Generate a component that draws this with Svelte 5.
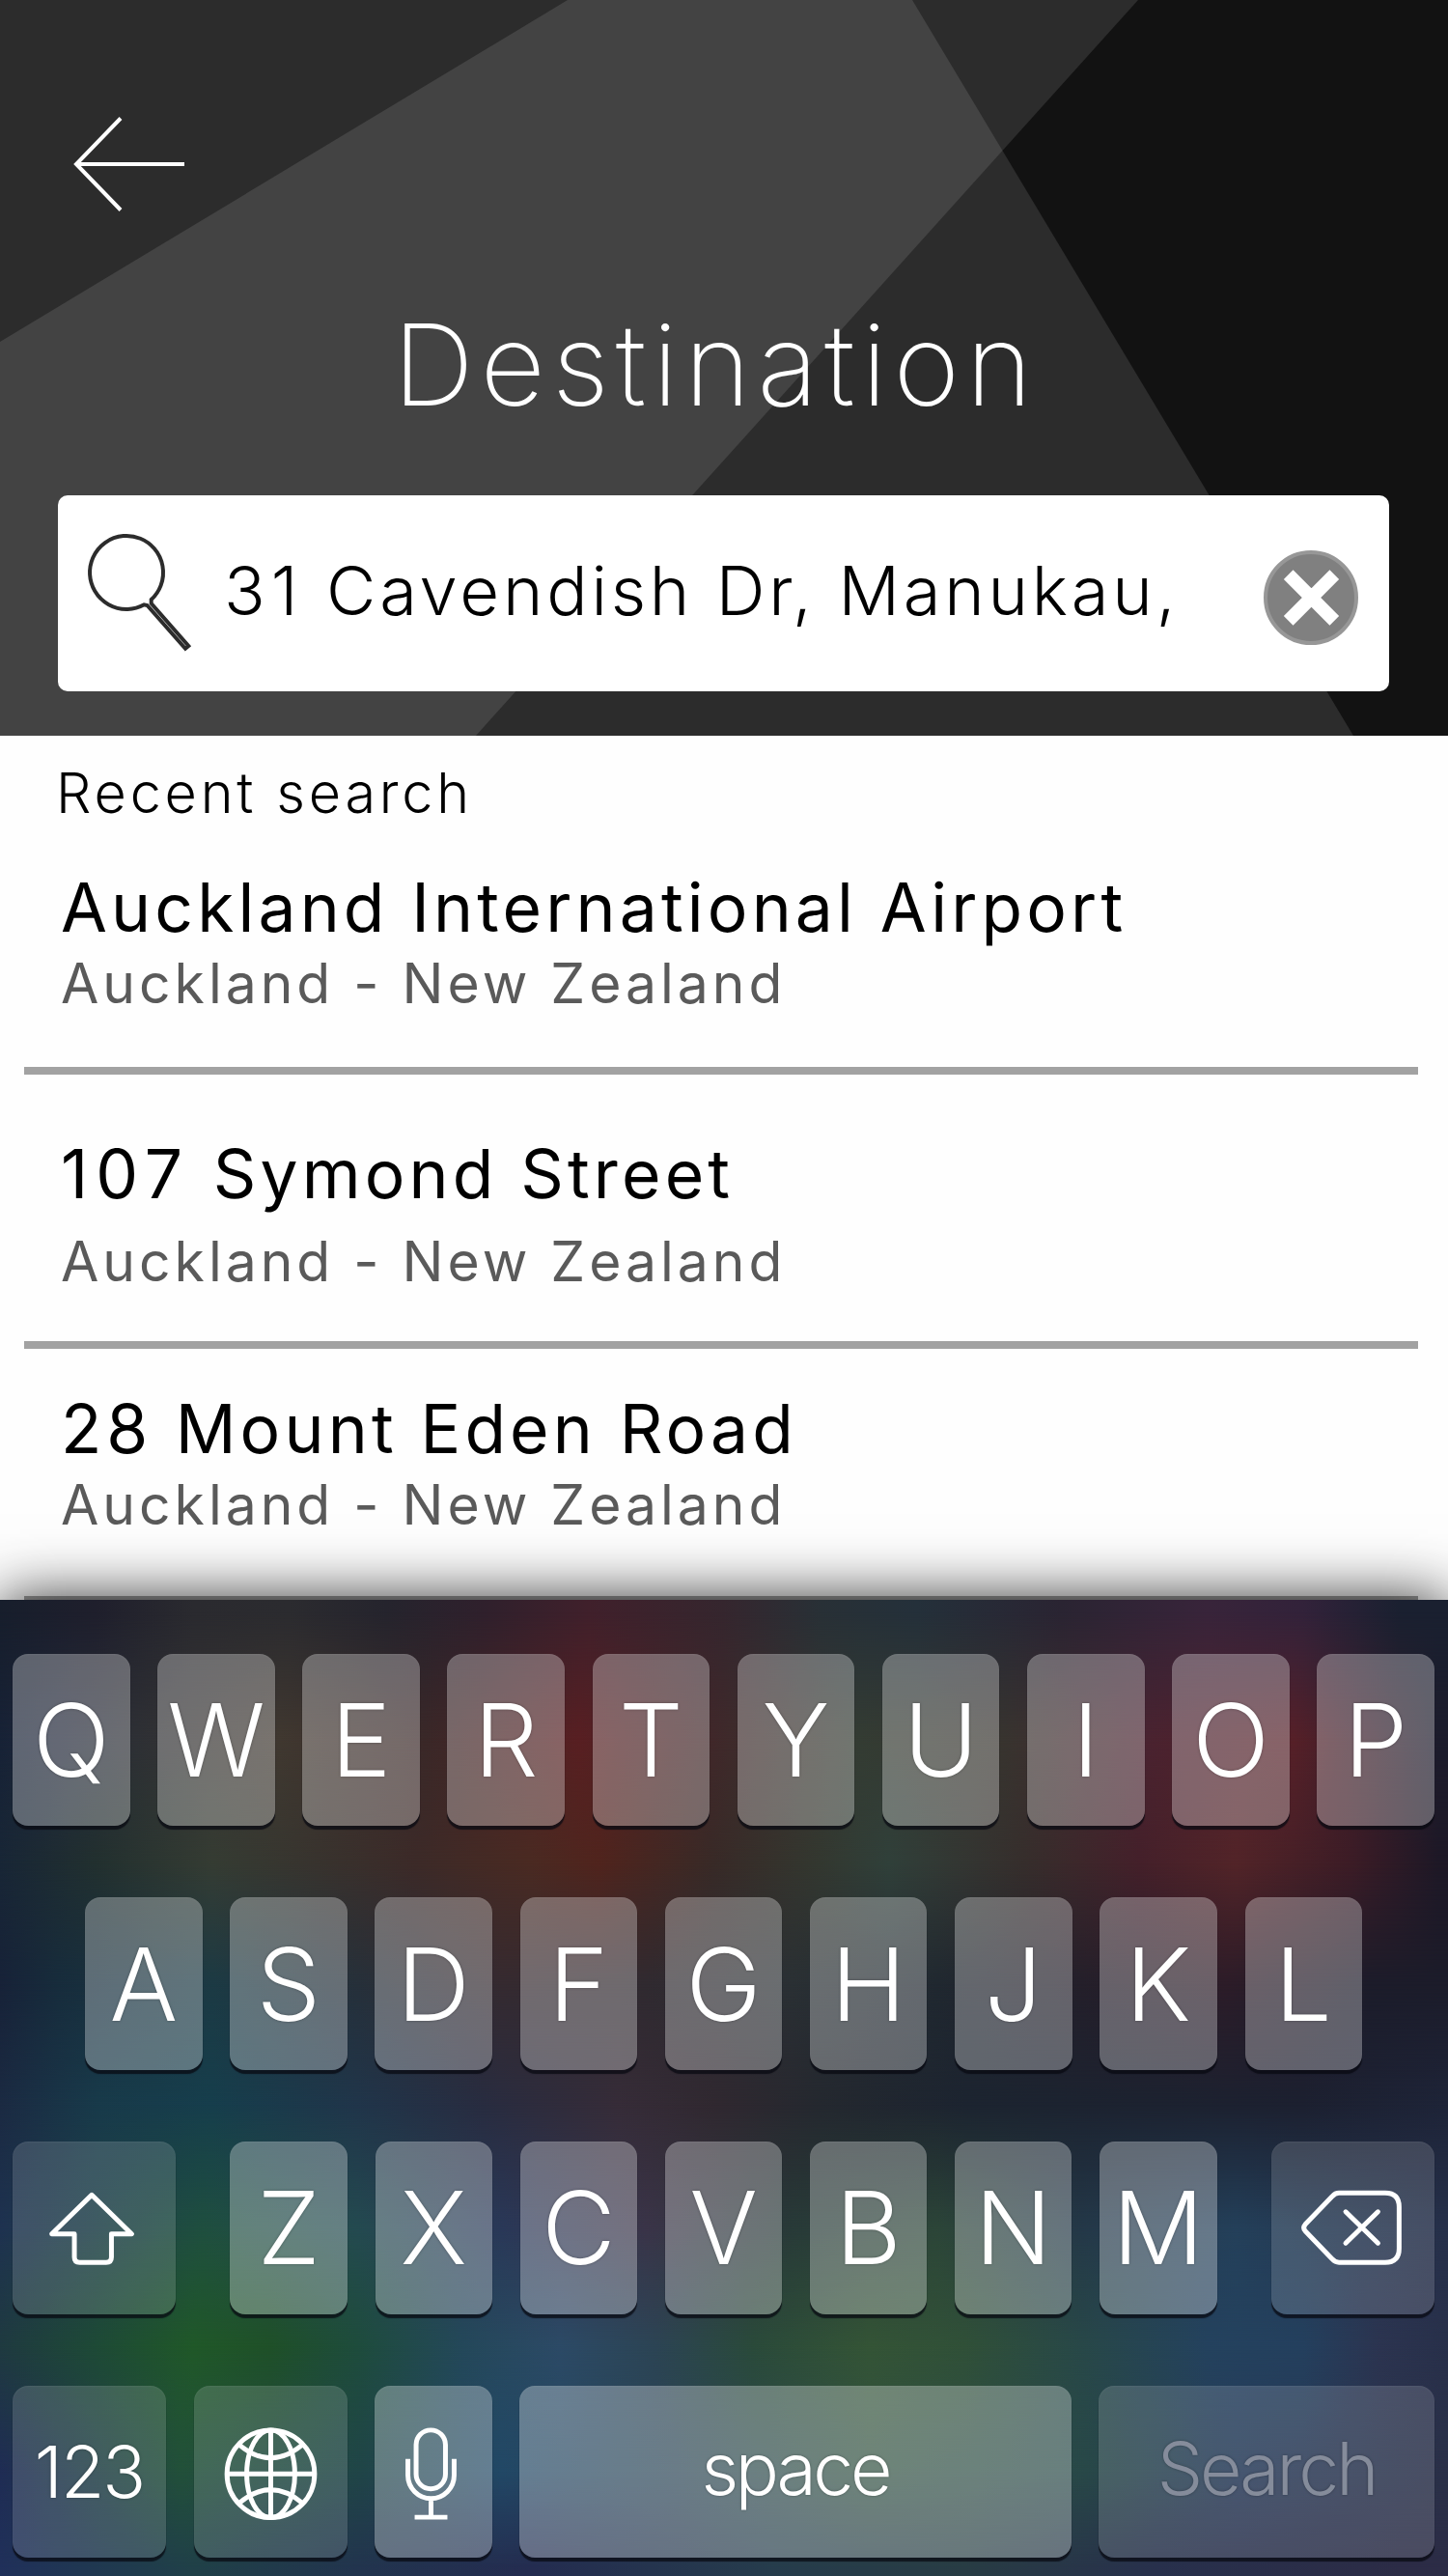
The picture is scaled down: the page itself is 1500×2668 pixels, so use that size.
<script>
  const places = [
    { number: '', name: 'Auckland International Airport', region: 'Auckland - New Zealand' },
    { number: '107', name: ' Symond Street', region: 'Auckland - New Zealand' },
    { number: '28', name: ' Mount Eden Road', region: 'Auckland - New Zealand' },
  ];

  const topRow = [...'QWERTYUIOP'];
  const homeRow = [...'ASDFGHJKL'];
  const bottomRow = [...'ZXCVBNM'];

  // Colour mesh behind the keys: each band lists [x, colour] stops at height y.
  const bands = [
    { y: 13, stops: [[0, '#171e2c'], [100, '#1f1f2c'], [200, '#2a2a2f'], [300, '#2b2b2f'], [400, '#25242d'], [500, '#2f202c'], [610, '#40202b'], [750, '#35262e'], [850, '#283036'], [950, '#24303a'], [1100, '#2a2432'], [1250, '#38243a'], [1350, '#32223a'], [1450, '#1a2030']] },
    { y: 143, stops: [[0, '#172236'], [60, '#22283a'], [140, '#2e3035'], [290, '#403830'], [440, '#3a2828'], [600, '#581f22'], [740, '#40282a'], [890, '#343c33'], [1040, '#38342f'], [1190, '#4a2330'], [1340, '#562028'], [1490, '#1c1c2c']] },
    { y: 273, stops: [[0, '#182636'], [100, '#22302f'], [220, '#353c33'], [330, '#38332e'], [430, '#3c2a28'], [550, '#4a2a22'], [620, '#50241d'], [740, '#382a27'], [850, '#333830'], [920, '#30403a'], [1060, '#362e2c'], [1180, '#44202a'], [1280, '#522428'], [1400, '#3c1c26'], [1490, '#1e1826']] },
    { y: 398, stops: [[0, '#172238'], [60, '#172c3c'], [220, '#1c3a44'], [370, '#26303a'], [520, '#352a30'], [670, '#302a30'], [820, '#2a3034'], [970, '#202830'], [1120, '#241f2a'], [1270, '#2c1c28'], [1420, '#1c1c2a']] },
    { y: 523, stops: [[0, '#1b2a42'], [100, '#183a4a'], [220, '#163e4c'], [370, '#20354a'], [500, '#282c40'], [640, '#362c38'], [740, '#302830'], [850, '#24282f'], [1000, '#1c2430'], [1200, '#1c2230'], [1350, '#1c2030'], [1500, '#1e2438']] },
    { y: 651, stops: [[0, '#1e3250'], [210, '#1f4f3f'], [370, '#244a50'], [520, '#2a3858'], [670, '#3a3448'], [820, '#283a38'], [970, '#2c4538'], [1120, '#243848'], [1280, '#24405a'], [1495, '#26304a']] },
    { y: 773, stops: [[0, '#1f3a40'], [100, '#1e4a36'], [200, '#205828'], [280, '#1f5028'], [370, '#1e4c3c'], [480, '#24485a'], [580, '#2c4a66'], [680, '#2c4454'], [780, '#2a4a3a'], [900, '#345436'], [1000, '#305038'], [1120, '#284848'], [1250, '#24425e'], [1350, '#24405e'], [1430, '#2c3450'], [1500, '#28304a']] },
    { y: 903, stops: [[0, '#1f2c54'], [187, '#22503a'], [375, '#204548'], [520, '#224866'], [700, '#2a4454'], [900, '#305040'], [1125, '#284848'], [1280, '#263a58'], [1495, '#2a3048']] },
    { y: 1003, stops: [[0, '#20305a'], [200, '#204048'], [370, '#22344e'], [550, '#242c50'], [800, '#263c4c'], [1000, '#283c44'], [1200, '#28304c'], [1450, '#2c2c46']] },
  ];

  function bandStyle(band, i) {
    const fill = band.stops.map(([x, c]) => `${c} ${x}px`).join(', ');
    const mask = i === 0 ? '' : `mask-image: linear-gradient(to bottom, transparent ${bands[i - 1].y}px, #000 ${band.y}px);`;
    return `background: linear-gradient(to right, ${fill}); ${mask}`;
  }
</script>

<main class="screen">
  <header class="hero">
    <svg class="facets" viewBox="0 0 1500 762" aria-hidden="true">
      <rect width="1500" height="762" fill="#2c2c2c" />
      <polygon points="588,0 945,0 1038.5,156 493,762 0,762 0,354" fill="#434343" />
      <polygon points="1179,0 1500,0 1500,762 1402,762 1038.5,156" fill="#121212" />
    </svg>
    <button class="back" aria-label="Back">
      <svg viewBox="0 0 116 100" width="116" height="100" fill="none" stroke="#fff" stroke-width="4">
        <path d="M50 2.5 4 50 50 97.5M4 50H116" />
      </svg>
    </button>
    <h1>Destination</h1>
    <div class="search">
      <svg class="lens" viewBox="88 551 112 126" width="112" height="126" fill="none" stroke="#2c2c2c" stroke-width="4">
        <path d="M148.300 626.300A38 38 0 1 1 155.700 621V625L194.300 669 191 671.800 151.500 627Z" />
      </svg>
      <span class="query"><span class="number">31</span> Cavendish Dr, Manukau,</span>
      <button class="clear" aria-label="Clear">
        <svg viewBox="0 0 98 98" width="98" height="98">
          <circle cx="49" cy="49" r="47" fill="#808080" stroke="#979797" stroke-width="4" />
          <path d="M25.700 25.200 73.300 72.800M73.300 25.200 25.700 72.800" stroke="#fff" stroke-width="13.700" />
        </svg>
      </button>
    </div>
  </header>

  <section class="recent">
    <h2>Recent search</h2>
    <ul>
      {#each places as place}
        <li>
          <p class="name"><span class="number">{place.number}</span>{place.name}</p>
          <p class="region">{place.region}</p>
        </li>
      {/each}
    </ul>
  </section>

  <section class="keyboard">
    <div class="glow" aria-hidden="true">
      {#each bands as band, i}
        <div class="band" style={bandStyle(band, i)}></div>
      {/each}
    </div>
    <div class="row">
      {#each topRow as k}<button class="key">{k}</button>{/each}
    </div>
    <div class="row home">
      {#each homeRow as k}<button class="key">{k}</button>{/each}
    </div>
    <div class="row">
      <button class="key dim wide" aria-label="Shift">
        <svg viewBox="13 2218 169 179" fill="none" stroke="#fff" stroke-width="5" stroke-linejoin="round">
          <path d="M95 2273.500 136.500 2314H115.500V2338Q115.500 2343.500 110 2343.500H82.500Q77 2343.500 77 2338V2314H53.500Z" />
        </svg>
      </button>
      <div class="letters">
        {#each bottomRow as k}<button class="key">{k}</button>{/each}
      </div>
      <button class="key dim wide" aria-label="Delete">
        <svg viewBox="1317 2218 169 179" fill="none" stroke="#fff" stroke-width="5" stroke-linejoin="round" stroke-linecap="round">
          <path d="M1387 2271.500H1435Q1449.500 2271.500 1449.500 2286V2329Q1449.500 2343.500 1435 2343.500H1387Q1383 2343.500 1380 2340L1352 2311Q1349 2307.500 1352 2304L1380 2275Q1383 2271.500 1387 2271.500Z" />
          <path d="M1394 2291 1427.500 2323.500M1427.500 2291 1394 2323.500" />
        </svg>
      </button>
    </div>
    <div class="row">
      <button class="key dim fn">123</button>
      <button class="key dim fn" aria-label="Next keyboard">
        <svg viewBox="201 2471 159 179" fill="none" stroke="#fff" stroke-width="5">
          <circle cx="280.500" cy="2562.500" r="45.500" />
          <ellipse cx="280.500" cy="2562.500" rx="25" ry="45.500" />
          <path d="M280.500 2517V2608M235 2562.500H326M247.500 2532Q280.500 2560 313.500 2532M247.500 2593Q280.500 2565 313.500 2593" />
        </svg>
      </button>
      <button class="key" aria-label="Dictate">
        <svg viewBox="388.500 2471 121.500 179" fill="none" stroke="#fff" stroke-width="5">
          <rect x="431.500" y="2517" width="30.500" height="61" rx="15.250" />
          <path d="M423 2547V2564A24 24 0 0 0 471 2564V2547M447 2588V2607M430 2607.500H464" />
        </svg>
      </button>
      <button class="key word space">space</button>
      <button class="key dim word go">Search</button>
    </div>
  </section>
</main>

<style>
  :global(body) {
    margin: 0;
    background: #fff;
  }

  .screen {
    width: 1500px;
    height: 2668px;
    overflow: hidden;
    font-family: Inter, 'Liberation Sans', sans-serif;
    color: #000;
    background: #fefefe;
  }

  h1, h2, p, ul {
    margin: 0;
    padding: 0;
    font-weight: 400;
    list-style: none;
    white-space: nowrap;
  }

  button {
    padding: 0;
    border: 0;
    background: none;
    color: inherit;
    font: inherit;
  }

  svg {
    display: block;
  }

  .hero {
    position: relative;
    box-sizing: border-box;
    height: 762px;
    padding: 120px 61px 0 60px;
    display: flex;
    flex-direction: column;
    color: #fff;
  }

  .facets {
    position: absolute;
    inset: 0;
    width: 1500px;
    height: 762px;
  }

  .back, h1, .search {
    position: relative;
  }

  .back {
    align-self: flex-start;
    margin-left: 15px;
    height: 100px;
  }

  h1 {
    margin-top: 88px;
    padding-left: 347px;
    line-height: 140px;
    font-size: 117px;
    font-weight: 200;
    letter-spacing: 6.800px;
  }

  .search {
    box-sizing: border-box;
    height: 203px;
    margin-top: 65px;
    padding: 0 32px 0 29px;
    display: flex;
    align-items: center;
    border-radius: 10px;
    background: #fff;
    color: #000;
  }

  .lens {
    margin-top: -1px;
  }

  .query {
    flex: 1;
    margin: -6px 0 0 31px;
    font-size: 70.500px;
    font-weight: 300;
    line-height: 90px;
    letter-spacing: 3.800px;
    white-space: nowrap;
  }

  .query .number {
    letter-spacing: 6px;
  }

  .clear {
    margin-top: 9px;
  }

  .recent {
    height: 895px;
    overflow: hidden;
  }

  h2 {
    padding: 1px 0 0 58px;
    font-size: 57.500px;
    font-weight: 300;
    line-height: 117px;
    letter-spacing: 3.800px;
  }

  li {
    box-sizing: border-box;
    margin: 0 31px 0 25px;
    padding: 17.500px 0 50.500px 38px;
    border-bottom: 8px solid #a2a2a2;
  }

  li:nth-child(2) {
    padding: 60.500px 0 46.500px 38px;
  }

  li:nth-child(2) .region {
    margin-top: 12px;
  }

  li:nth-child(2) .number {
    letter-spacing: 8px;
  }

  li:nth-child(3) {
    padding: 41px 0 58px 38px;
  }

  li:nth-child(3) .number {
    letter-spacing: 4.800px;
  }

  .name {
    font-size: 69.500px;
    line-height: 84px;
    letter-spacing: 4.150px;
  }

  .region {
    font-size: 57px;
    line-height: 73px;
    letter-spacing: 4px;
    color: #5a5a5a;
  }

  .keyboard {
    position: relative;
    box-sizing: border-box;
    height: 1011px;
    padding: 55.500px 14px 0 13px;
    display: flex;
    flex-direction: column;
    gap: 74.250px;
    background: #1f2638;
    box-shadow: 0 0 60px rgba(0, 0, 0, 0.85);
    color: #fff;
  }

  .glow, .band {
    position: absolute;
    inset: 0;
  }

  .row {
    position: relative;
    display: flex;
    justify-content: space-between;
  }

  .home {
    padding: 0 75px;
  }

  .letters {
    display: flex;
    gap: 28.600px;
  }

  .key {
    width: 121.500px;
    height: 178.500px;
    border-radius: 16px;
    background: rgba(255, 255, 255, 0.3);
    box-shadow: 0 4px 1px rgba(8, 10, 18, 0.75), inset 0 1px 2px rgba(255, 255, 255, 0.06);
    font-size: 105px;
    font-weight: 320;
    line-height: 178px;
    text-align: center;
    text-shadow: 0 0 3px rgba(0, 0, 0, 0.3);
  }

  .key svg {
    width: 100%;
    height: 100%;
  }

  .dim {
    background: rgba(255, 255, 255, 0.15);
  }

  .wide {
    width: 169px;
  }

  .fn {
    width: 159px;
    font-size: 74px;
    font-weight: 350;
    letter-spacing: -2px;
  }

  .word {
    padding-bottom: 6px;
    font-size: 75px;
    font-weight: 350;
    line-height: 166px;
    letter-spacing: -3.300px;
  }

  .space {
    width: 571.500px;
  }

  .go {
    width: 348px;
    font-weight: 300;
    letter-spacing: -3px;
    color: #858c9b;
  }
</style>
